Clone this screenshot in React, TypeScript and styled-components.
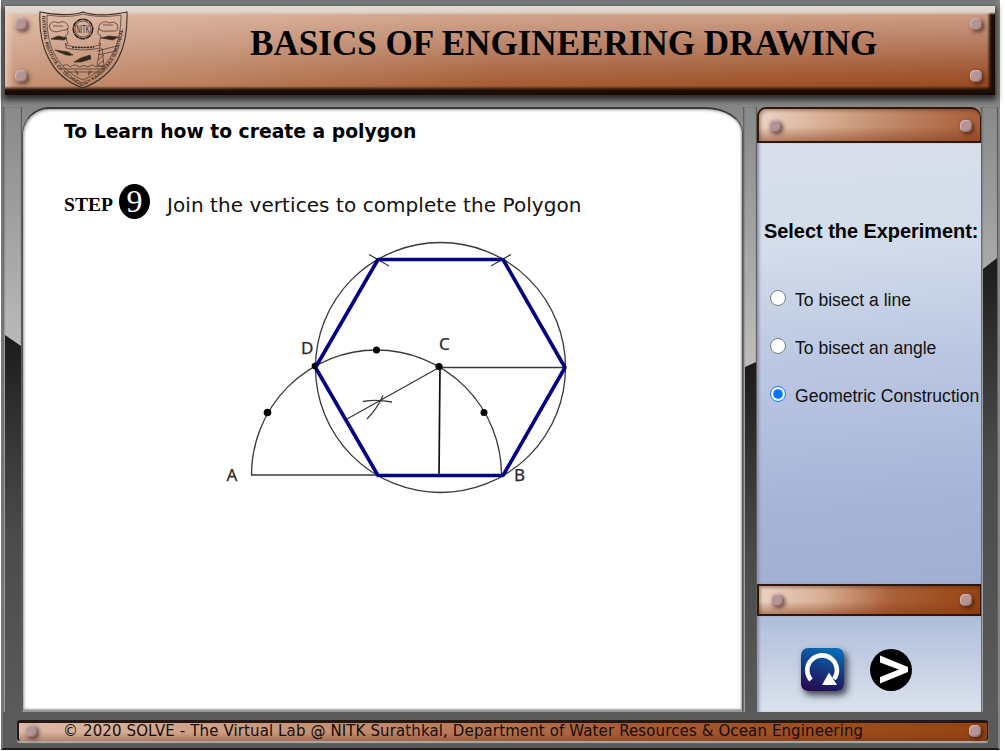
import React, { useState } from "react";
import styled, { createGlobalStyle, css } from "styled-components";

const GlobalStyle = createGlobalStyle`
  * { box-sizing: border-box; }
  html, body { margin: 0; padding: 0; background: #fff; overflow: hidden; }
`;

const verdana = `Verdana, "DejaVu Sans", sans-serif`;
const arial = `"Liberation Sans", Arial, sans-serif`;
const times = `"Liberation Serif", "Times New Roman", serif`;

const Shell = styled.div`
  position: relative;
  width: 999px;
  height: 750px;
  margin-left: 1px;
  display: flex;
  flex-direction: column;
  padding-top: 6px;
  background: linear-gradient(#737777, #888b8b 6px, #888 95px, #888 110px, #b9b9b9 340px, #555 341px, #5a5a5a);
  border-left: 2px solid #777;
  border-right: 2px solid #8b8383;
  border-bottom: 2px solid #1b1b1b;
`;

const Header = styled.header`
  display: flex;
  align-items: center;
  height: 89px;
  margin: 0 3px 0 2px;
  padding: 0 13px 0 10px;
  flex: none;
  background:
    linear-gradient(#e4dcd7 0, #dfd2ca 6px, transparent 9px),
    linear-gradient(transparent 80px, #1e0e06 84px, #170a04 89px),
    linear-gradient(to left, #150a05 0, #241008 4px, transparent 8px),
    linear-gradient(to right, rgba(255, 235, 225, 0.45), transparent 9px),
    linear-gradient(to right, rgba(244, 220, 204, 0.5), rgba(240, 210, 190, 0.14) 50%, transparent),
    linear-gradient(#cf9f85 5px, #b98268 35%, #a45e3a 68%, #984719 92%);
  box-shadow: 0 3px 6px 2px rgba(20, 20, 20, 0.8);
`;

const RivetColumn = styled.div`
  display: flex;
  flex-direction: column;
  justify-content: space-between;
  height: 64px;
  margin-bottom: 1px;
`;

const Rivet = styled.i`
  display: block;
  flex: none;
  width: 12px;
  height: 12px;
  border-radius: 5px;
  background: #b69494;
  box-shadow: inset 1px 1px 1px #cfb6b6, inset -1px -1px 1px #8d6d6d, 2px 2px 4px rgba(45, 20, 12, 0.7);
`;

const Crest = styled.svg`
  width: 90px;
  height: 80px;
  margin: 0 0 5px 11px;
  flex: none;
`;

const Title = styled.h1`
  flex: 1;
  margin: 0 0 13px 122px;
  font: bold 35.1px/42px ${times};
  color: #000;
  white-space: nowrap;
`;

const Body = styled.div`
  display: flex;
  height: 605px;
  margin-top: 12px;
  flex: none;
`;

const Rail = styled.div<{ $width: number; $split: number; $slant: number }>`
  position: relative;
  flex: none;
  width: ${(p) => p.$width}px;
  background: linear-gradient(#898989, #bcbcbc 250px);
  box-shadow: inset 2px 0 2px -1px #555, inset -1px 0 1px #555;
  &::after {
    content: "";
    position: absolute;
    inset: ${(p) => p.$split}px 1px 0 2px;
    background: linear-gradient(#1b1b1b, #303030 80px, #4b4b4b 200px, #5a5a5a);
    clip-path: ${(p) =>
      p.$slant > 0
        ? `polygon(0 0, 100% ${p.$slant}px, 100% 100%, 0 100%)`
        : `polygon(0 ${-p.$slant}px, 100% 0, 100% 100%, 0 100%)`};
  }
`;

const BoardSurround = styled.div`
  background: linear-gradient(#858585, #999 45px);
  flex: none;
`;

const Board = styled.main`
  width: 721px;
  height: 100%;
  padding: 12px 0 0 41px;
  background: #fff;
  border: 1px solid #555;
  border-top: 2px solid #373737;
  border-bottom: 2px solid #999;
  border-radius: 27px 38px 0 0 / 28px 26px 0 0;
  box-shadow: inset 1px 1px 3px #999, inset -1px -1px 2px #aaa;
`;

const Aim = styled.h2`
  margin: 0;
  font: bold 18.75px/22px ${verdana};
  white-space: nowrap;
`;

const StepLine = styled.div`
  display: flex;
  align-items: center;
  height: 36px;
  margin-top: 40px;
  white-space: nowrap;
`;

const StepWord = styled.span`
  width: 55px;
  padding-top: 7px;
  font: bold 19.6px/24px ${times};
`;

const StepNumber = styled.span`
  width: 31px;
  height: 35px;
  border-radius: 50%;
  background: #000;
  color: #fff;
  text-align: center;
  font: 32px/35px ${times};
`;

const StepText = styled.span`
  margin-left: 17px;
  padding-top: 7px;
  font: 20px/24px ${verdana};
  letter-spacing: 0.07px;
  color: #111;
`;

const Figure = styled.svg`
  display: block;
  width: 370px;
  height: 270px;
  margin: 11px 0 0 156px;
`;

const Side = styled.aside`
  width: 224px;
  flex: none;
  display: flex;
  flex-direction: column;
  background: #858585;
`;

const Strip = styled.div<{ $top?: boolean }>`
  display: flex;
  align-items: center;
  justify-content: space-between;
  flex: none;
  height: ${(p) => (p.$top ? 36 : 32)}px;
  padding: ${(p) => (p.$top ? "1px 8px 0 10px" : "0 8px 1px 12px")};
  border: 1px solid #30170c;
  border-width: 2px 1px 2px 2px;
  background:
    linear-gradient(transparent 55%, rgba(130, 55, 18, 0.5)),
    linear-gradient(100deg, #ecd5c6, #d9b096 28%, ${(p) => (p.$top ? "#c08668 60%, #a75c35" : "#aa6038 60%, #96430f")});
  box-shadow: inset 2px 2px 3px rgba(70, 30, 15, 0.35);
  ${(p) => p.$top && css`border-radius: 9px 10px 0 0;`}
`;

const Choices = styled.form`
  height: 441px;
  padding: 76px 0 0 7px;
  background: linear-gradient(176deg, #d9dfeb, #d2dcea 24%, #bbc7e2 49%, #a5b3d7 82%, #a2afd4);
  box-shadow: inset 3px 0 3px -1px #8791a8;
  font-family: ${arial};
  white-space: nowrap;
`;

const ChoicesTitle = styled.h3`
  margin: 0 0 47px;
  font: bold 19.9px/24px ${arial};
`;

const Choice = styled.label`
  display: flex;
  align-items: flex-start;
  height: 48px;
  font-size: 17.55px;
  line-height: 20px;
  color: #111;
  input {
    width: 16px;
    height: 16px;
    margin: 0 9px 0 6px;
    flex: none;
  }
`;

const Controls = styled.div`
  display: flex;
  gap: 26px;
  flex: 1;
  padding: 32px 0 0 44px;
  background: linear-gradient(#afbddb, #dbe2ed);
  box-shadow: inset 3px 0 3px -1px #8791a8;
`;

const ControlButton = styled.button<{ $blue?: boolean }>`
  width: ${(p) => (p.$blue ? 43 : 42)}px;
  height: ${(p) => (p.$blue ? 43 : 42)}px;
  margin-top: ${(p) => (p.$blue ? 0 : 1)}px;
  padding: 0;
  border: 0;
  border-radius: ${(p) => (p.$blue ? "7px" : "50%")};
  background: ${(p) => (p.$blue ? "linear-gradient(15deg, #280448, #14367d 48%, #0676bf)" : "#000")};
  box-shadow: ${(p) => (p.$blue ? "3px 4px 7px rgba(20, 25, 35, 0.8)" : "none")};
  svg { display: block; width: 100%; height: 100%; }
`;

const Footer = styled.footer`
  display: flex;
  align-items: center;
  flex: none;
  height: 21px;
  margin: 8px 10px 0 14px;
  padding: 0 6px 2px 6px;
  border: solid #251711;
  border-width: 3px 1px 0 2px;
  border-radius: 3px;
  background: linear-gradient(transparent 50%, rgba(120, 50, 20, 0.4)), linear-gradient(to right, #ddbaa7, #c28b6d 36%, #a85c34 62%, #96430f);
  box-shadow: 0 2px 1px #aaa;
`;

const Copyright = styled.span`
  flex: 1;
  margin-left: 26px;
  font: 15px/16px ${verdana};
  letter-spacing: 0.12px;
  color: #130c08;
  white-space: nowrap;
`;

function CollegeCrest() {
  return (
    <Crest viewBox="38 8 90 80" fill="none" stroke="#3d3029" strokeWidth=".7">
      <defs>
        <path id="crest-rim" d="M42 16 C42 48 53 73 82 86 C112 74 124 48 124 15" />
      </defs>
      <path d="M40 12 C54 15 72 16 83 12 C94 16 112 15 127 12 C128 48 117 75 83 88 C51 77 38 46 40 12Z" strokeWidth="1.1" />
      <path d="M47 15 C61 17 73 17 83 14 C94 17 108 17 121 15 C121 46 110 68 83 80 C57 69 46 46 47 15Z" />
      <text fontFamily="Liberation Sans" fontSize="5" fontWeight="bold" fill="#3d3029" stroke="none">
        <textPath href="#crest-rim" textLength="160">NATIONAL INSTITUTE OF TECHNOLOGY KARNATAKA SURATHKAL</textPath>
      </text>
      <circle cx="83" cy="29" r="9.7" strokeWidth="1.6" strokeDasharray="6 .5" stroke="#2b221d" />
      <circle cx="83" cy="29" r="8" />
      <text x="83" y="33" fontFamily="Liberation Sans" fontSize="11" textAnchor="middle" fill="#302620" stroke="none" textLength="13" lengthAdjust="spacingAndGlyphs">NITK</text>
      <path d="M50 24q4-4 8-1q6-3 9 1q3 4-1 6q-4 0-6 1q-6 2-9-1q-3-3-1-6zM100 24q5-4 9-1q5-2 8 1q2 5-1 7q-4 0-8 0q-5 1-8-1q-3-3 0-6zM66 43q-2 1 0 2q17 5 34 0q2-1 0-2v5q-17 4-34 0zM53 26h10M103 25h10M67 28q3 6-2 8l3 8M99 28q-3 6 2 8l-2 8" />
      <path d="M72 47.5h22" strokeDasharray="2 1" strokeWidth="1.3" />
      <path d="M51 39l7-3 9 2-3 2zM101 38l8-2 9 1-5 3zM55 50l13 2 5 3-7 0zM74 62l7-4 9-3 1 4-10 3z" fill="#332720" />
      <path d="M57 51l14 5M97 51l20-5M98 55l18-4M100 48l-3 18h7l-2-18M98 60l6-5M98 65l6-5M62 66q5-3 8 1q5-4 9 0q5-3 9 0q5-4 8 0q5-2 9 0M62 69h43M67 72h33M75 70l3 5l-1-4M90 70l-2 5l4-4" />
    </Crest>
  );
}

function PolygonFigure() {
  return (
    <Figure viewBox="220 230 370 270" fill="none" stroke="#383838" strokeWidth="1.3">
      <circle cx="440.5" cy="367.5" r="125" />
      <path d="M251.5 475 A125 125 0 0 1 501.5 475" />
      <path d="M251 475H378M440 367.5H565M347 419L440 367M369 254.5L389 266M491 266L511 254.5M363 401.5Q377 399 392 402M383 395.5Q377 409 367 419" />
      <path d="M440 367L439 475" strokeWidth="1.7" stroke="#111" />
      <path d="M378 259.5H503L565 367.5L503 475.5H378L315.5 367.5Z" stroke="#000083" strokeWidth="3.6" strokeLinejoin="bevel" />
      <g fill="#000" stroke="none">
        <circle cx="267.5" cy="412.5" r="3.8" />
        <circle cx="376.5" cy="350" r="3.5" />
        <circle cx="439" cy="366.5" r="3.6" />
        <circle cx="484" cy="412.5" r="3.5" />
        <path d="M316 362.5a3.6 3.6 0 1 0 0 7z" />
      </g>
      <g fill="#282828" stroke="#282828" strokeWidth=".25" fontFamily="Noto Sans" fontSize="17">
        <text x="226.5" y="481">A</text>
        <text x="514" y="481">B</text>
        <text x="439" y="349.5">C</text>
        <text x="301" y="353.5">D</text>
      </g>
    </Figure>
  );
}

const experiments = ["To bisect a line", "To bisect an angle", "Geometric Construction"];

export default function App() {
  const [selected, setSelected] = useState(2);
  return (
    <>
      <GlobalStyle />
      <Shell>
        <Header>
          <RivetColumn><Rivet /><Rivet /></RivetColumn>
          <CollegeCrest />
          <Title>BASICS OF ENGINEERING DRAWING</Title>
          <RivetColumn><Rivet /><Rivet /></RivetColumn>
        </Header>
        <Body>
          <Rail $width={19} $split={228} $slant={11} />
          <BoardSurround>
            <Board>
              <Aim>To Learn how to create a polygon</Aim>
              <StepLine>
                <StepWord>STEP</StepWord>
                <StepNumber>9</StepNumber>
                <StepText>Join the vertices to complete the Polygon</StepText>
              </StepLine>
              <PolygonFigure />
            </Board>
          </BoardSurround>
          <Rail $width={14} $split={255} $slant={-5} />
          <Side>
            <Strip $top><Rivet /><Rivet /></Strip>
            <Choices>
              <ChoicesTitle>Select the Experiment:</ChoicesTitle>
              {experiments.map((name, i) => (
                <Choice key={name}>
                  <input type="radio" name="experiment" checked={selected === i} onChange={() => setSelected(i)} />
                  {name}
                </Choice>
              ))}
            </Choices>
            <Strip><Rivet /><Rivet /></Strip>
            <Controls>
              <ControlButton $blue aria-label="Restart">
                <svg viewBox="0 0 43 43">
                  <path d="M10 32A14.8 14.8 0 1 1 33 31" fill="none" stroke="#fff" strokeWidth="4.6" />
                  <path d="M21 37L28 24.5L36 37Z" fill="#fff" />
                </svg>
              </ControlButton>
              <ControlButton aria-label="Next">
                <svg viewBox="0 0 42 42">
                  <path d="M10 6.5L38 18V23L10 34.5V28L29 20.5L10 13.5Z" fill="#fff" />
                </svg>
              </ControlButton>
            </Controls>
          </Side>
          <Rail $width={17} $split={151} $slant={-11} />
        </Body>
        <Footer>
          <Rivet />
          <Copyright>© 2020 SOLVE - The Virtual Lab @ NITK Surathkal, Department of Water Resources &amp; Ocean Engineering</Copyright>
          <Rivet />
        </Footer>
      </Shell>
    </>
  );
}
